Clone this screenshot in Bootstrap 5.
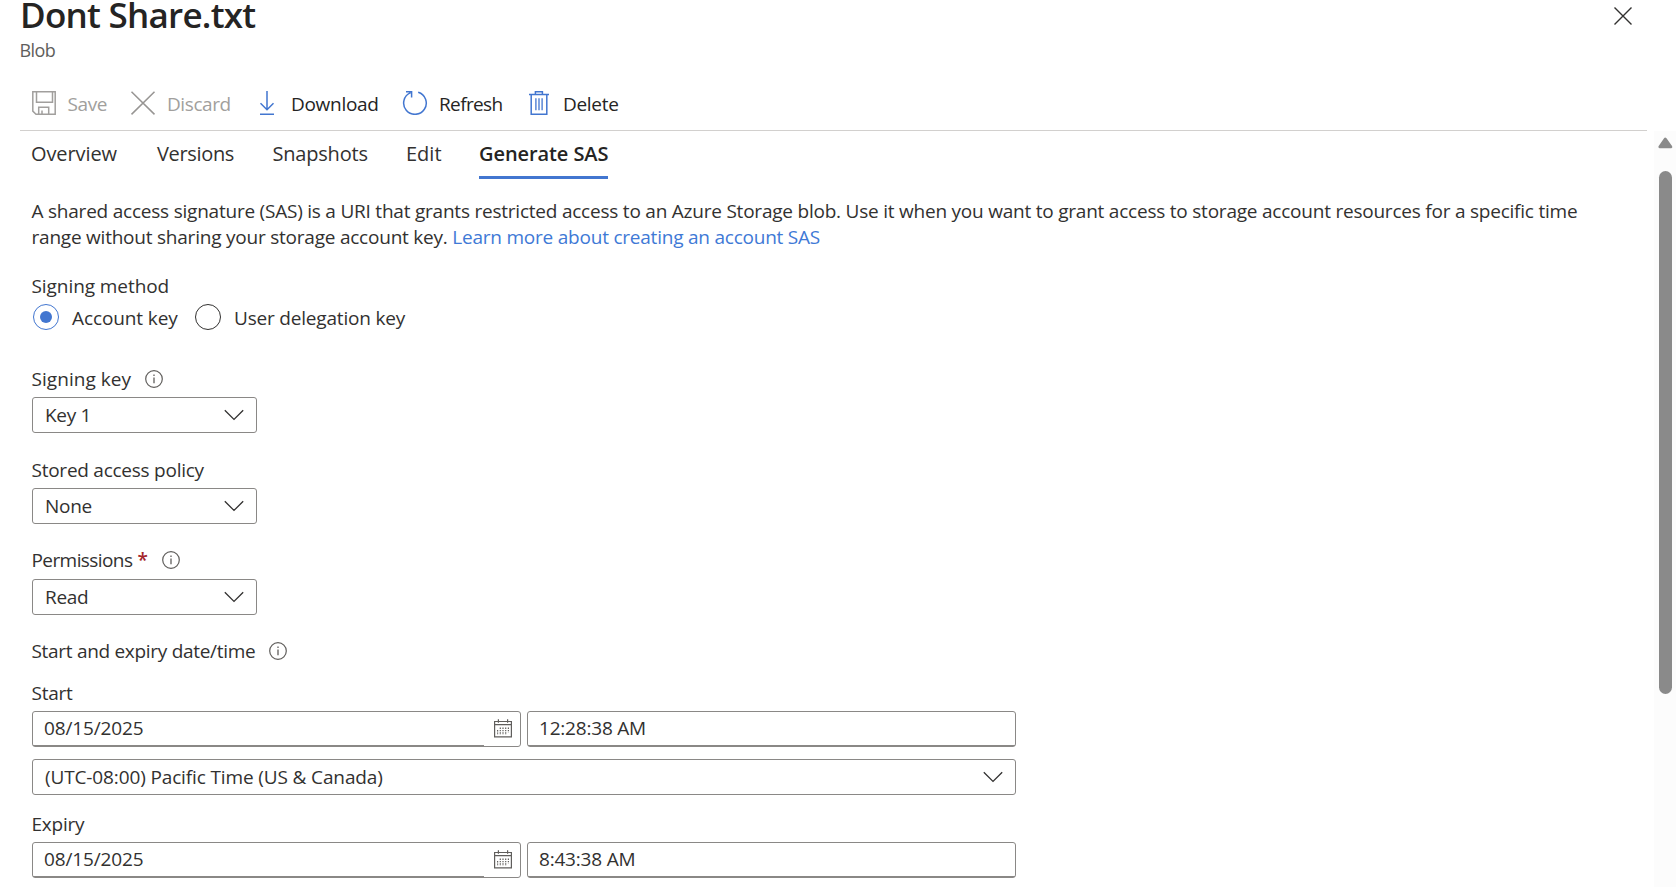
<!DOCTYPE html>
<html lang="en">
<head>
<meta charset="utf-8">
<title>Dont Share.txt</title>
<link href="https://cdn.jsdelivr.net/npm/bootstrap@5.3.0/dist/css/bootstrap.min.css" rel="stylesheet">
<script src="https://cdn.jsdelivr.net/npm/bootstrap@5.3.0/dist/js/bootstrap.bundle.min.js"></script>
<style>
body{height:887px;overflow:hidden;background:#fff;color:#323130;font:19px/26px "Open Sans","Noto Sans",sans-serif;letter-spacing:-.2px}
svg{display:block;flex:none;fill:none}
.blade-title{font-size:35px;line-height:29px;font-weight:600;letter-spacing:-.74px;color:#252423}
.blade-kind{font-size:18px;line-height:26px;letter-spacing:-.55px;color:#605e5c;margin:8px 0 0 -.5px}
.close-btn{position:absolute;right:44px;top:7px;padding:0;border:0;background:none}
.blade-head{margin:0 29px 0 20px;height:131px;border-bottom:1px solid #d2d0ce}
.cmds{padding:26px 0 0 11px}
.cmds .cmd{border:0;background:none;padding:2px 0 0;color:#252423;line-height:26px;height:28px;display:flex;align-items:center;letter-spacing:-.42px}
.cmds .cmd svg{margin-top:-2px}
.cmds .cmd.off{color:#a19f9d}
.blade-tabs{margin:9px 0 0 31px;font-size:20px;line-height:28px}
.blade-tabs a{color:#323130;text-decoration:none;height:39px;white-space:nowrap}
.blade-tabs a.on{font-weight:600;border-bottom:3px solid #4276d0;color:#252423}
.pane{padding-left:32px;width:1654px}
.intro{margin:19px 0 0 -.5px;width:1580px;letter-spacing:-.222px}
.intro a{color:#4079d6;text-decoration:none}
.cap{height:31px;margin-left:-.5px;letter-spacing:-.25px}
.cap svg{margin-top:4px}
.dial{width:26px;height:26px;border:1px solid #323130;border-radius:50%;flex:none}
.dial.on{border-color:#4276d0}
.dial.on i{width:12px;height:12px;border-radius:50%;background:#4276d0}
.box{height:36px;border:1px solid #8a8886;border-radius:3px;padding:0 12px;display:flex;align-items:center;justify-content:space-between;letter-spacing:-.13px;white-space:nowrap}
.box.pick{width:225px;letter-spacing:-.3px}
.wide{width:984px}
.box.entry{width:489px;position:relative;padding:0 8px 2px 11px}
.box.entry::after{content:"";position:absolute;left:0;right:0;bottom:0;height:1px;background:#8a8886}
.box.dated::after{right:36px}
.track{position:absolute;top:131px;right:0;bottom:0;width:22px;background:#fcfcfc}
.track svg{margin:6px 0 0 4px}
.thumb{width:13px;height:523px;border-radius:7px;background:#8a8a8a;margin:22px 0 0 5px}
</style>
</head>
<body class="position-relative">
<svg class="d-none">
  <symbol id="chev" viewBox="0 0 20 12"><path d="M.8 1.2 10 10.4l9.2-9.2" stroke="#323130" stroke-width="1.3"/></symbol>
  <symbol id="info" viewBox="0 0 18 18"><circle cx="9" cy="9" r="8.3" stroke="#605e5c" stroke-width="1.2"/><path d="M9 7.4v5.8M9 4.6v1.5" stroke="#605e5c" stroke-width="1.3"/></symbol>
  <symbol id="cal" viewBox="0 0 18 19"><path d="M.6 2.5h16.8v15.4H.6zM.6 5.7h16.8M4.4.2v3.6M13.6.2v3.6" stroke="#605e5c" stroke-width="1.2"/><path d="M3.6 11v5M6.3 8.5V16M9 8.5V16M11.7 8.5V16M14.4 8.5v5" stroke="#605e5c" stroke-width="1.2" stroke-dasharray="1.4 1"/></symbol>
</svg>
<header class="blade-head">
  <h1 class="blade-title m-0">Dont Share.txt</h1>
  <div class="blade-kind">Blob</div>
  <button class="close-btn" aria-label="Close"><svg width="18" height="18"><path d="m.5.5 17 17m0-17-17 17" stroke="#323130" stroke-width="1.4"/></svg></button>
  <div class="cmds d-flex">
    <button class="cmd off" style="width:99px"><svg width="36.5" height="24" viewBox="0 0 36.5 24" stroke="#a19f9d" stroke-width="1.5"><path d="M1.8.8h22.4v22.4H5l-3.2-3.1zM5.5.8v10.4h16V.8M7.7 23v-6.8h10V23M11 23v-3.6"/></svg>Save</button>
    <button class="cmd off" style="width:129px"><svg width="37" height="24" viewBox="0 0 37 24" stroke="#979593" stroke-width="1.5"><path d="m1.5.8 23 22.6m0-22.6-23 22.6"/></svg>Discard</button>
    <button class="cmd" style="width:143px;letter-spacing:-.3px"><svg width="32" height="24" viewBox="0 0 32 24" stroke="#4276d0" stroke-width="1.5"><path d="M8 0v18.5M1.5 12.2 8 18.7l6.5-6.5M1 23.2h14"/></svg>Download</button>
    <button class="cmd" style="width:127px;letter-spacing:-.62px"><svg width="37" height="24" viewBox="0 0 37 24" stroke="#4276d0" stroke-width="1.5"><path d="M16.2 1.2A11.3 11.3 0 1 1 8.6 1.6M4 .8h5.6v5.6"/></svg>Refresh</button>
    <button class="cmd" style="letter-spacing:-.3px"><svg width="34" height="24" viewBox="0 0 34 24" stroke="#4276d0" stroke-width="1.5"><path d="M0 3.4h20M6.4 3.2V.8h7v2.4M2.2 3.4v19.8h15.6V3.4"/><path d="M6.9 7.2v12M10 7.2v12M13.1 7.2v12" stroke-width="1.3"/></svg>Delete</button>
  </div>
</header>
<nav class="blade-tabs d-flex">
  <a href="#" style="width:126px;letter-spacing:-.1px">Overview</a>
  <a href="#" style="width:115.5px;letter-spacing:-.34px">Versions</a>
  <a href="#" style="width:133.5px">Snapshots</a>
  <a href="#" style="width:73px;letter-spacing:0">Edit</a>
  <a href="#" class="on" style="letter-spacing:-.08px">Generate SAS</a>
</nav>
<main class="pane">
  <p class="intro">A shared access signature (SAS) is a URI that grants restricted access to an Azure Storage blob. Use it when you want to grant access to storage account resources for a specific time<br>range without sharing your storage account key. <a href="#">Learn more about creating an account SAS</a></p>
  <div class="cap" style="margin-top:23px;letter-spacing:-.07px">Signing method</div>
  <div class="d-flex align-items-start" style="margin-left:1px">
    <span class="dial on d-flex align-items-center justify-content-center"><i></i></span><span style="margin-left:13px;width:123px;padding-top:1px;letter-spacing:-.1px">Account key</span>
    <span class="dial"></span><span style="margin-left:13px;padding-top:1px;letter-spacing:-.19px">User delegation key</span>
  </div>
  <div class="cap d-flex" style="margin-top:35px;letter-spacing:.05px">Signing key<svg width="18" height="18" style="margin-left:14px"><use href="#info"/></svg></div>
  <div class="box pick">Key 1<svg width="20" height="12"><use href="#chev"/></svg></div>
  <div class="cap" style="margin-top:24px">Stored access policy</div>
  <div class="box pick">None<svg width="20" height="12"><use href="#chev"/></svg></div>
  <div class="cap d-flex" style="margin-top:23px;height:32px;letter-spacing:-.58px">Permissions<span style="color:#a4262c;margin-left:5px;font-weight:600">*</span><svg width="18" height="18" style="margin-left:15px"><use href="#info"/></svg></div>
  <div class="box pick">Read<svg width="20" height="12"><use href="#chev"/></svg></div>
  <div class="cap d-flex" style="margin-top:23px;height:42px;letter-spacing:-.3px">Start and expiry date/time<svg width="18" height="18" style="margin-left:14px"><use href="#info"/></svg></div>
  <div class="cap">Start</div>
  <div class="wide d-flex justify-content-between">
    <div class="box entry dated">08/15/2025<svg width="18" height="19"><use href="#cal"/></svg></div>
    <div class="box entry" style="letter-spacing:-.2px">12:28:38 AM</div>
  </div>
  <div class="box wide" style="margin-top:12px">(UTC-08:00) Pacific Time (US &amp; Canada)<svg width="20" height="12"><use href="#chev"/></svg></div>
  <div class="cap" style="margin-top:16px">Expiry</div>
  <div class="wide d-flex justify-content-between">
    <div class="box entry dated">08/15/2025<svg width="18" height="19"><use href="#cal"/></svg></div>
    <div class="box entry" style="letter-spacing:-.2px">8:43:38 AM</div>
  </div>
</main>
<div class="track">
  <svg width="15" height="12"><path d="M7.3 2.2 12.8 9.8H1.9z" fill="#8a8a8a" stroke="#8a8a8a" stroke-width="3" stroke-linejoin="round"/></svg>
  <div class="thumb"></div>
</div>
</body>
</html>
